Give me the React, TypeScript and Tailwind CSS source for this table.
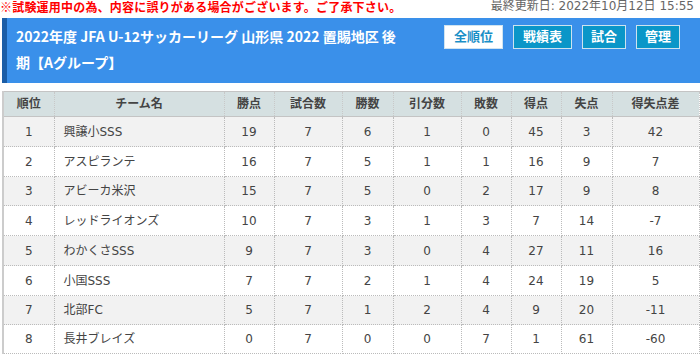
import React from "react";

const rows = [
  [1, "興譲小SSS", 19, 7, 6, 1, 0, 45, 3, 42],
  [2, "アスピランテ", 16, 7, 5, 1, 1, 16, 9, 7],
  [3, "アビーカ米沢", 15, 7, 5, 0, 2, 17, 9, 8],
  [4, "レッドライオンズ", 10, 7, 3, 1, 3, 7, 14, -7],
  [5, "わかくさSSS", 9, 7, 3, 0, 4, 27, 11, 16],
  [6, "小国SSS", 7, 7, 2, 1, 4, 24, 19, 5],
  [7, "北部FC", 5, 7, 1, 2, 4, 9, 20, -11],
  [8, "長井ブレイズ", 0, 7, 0, 0, 7, 1, 61, -60],
];

const heads = ["順位", "チーム名", "勝点", "試合数", "勝数", "引分数", "敗数", "得点", "失点", "得失点差"];
const widths = [51, 170, 50, 68, 51, 68, 50, 50, 51, 87];
const heights = [30, 30, 29, 30, 30, 30, 29, 29];

export default function App() {
  return (
    <div
      className="w-[700px] h-[358px] overflow-hidden bg-white"
      style={{ fontFamily: '"DejaVu Sans", "Noto Sans CJK JP", sans-serif' }}
    >
      <div className="flex justify-between items-end -mt-[1px] h-[15px] leading-[15px] text-[12px]">
        <span className="font-bold text-[#ff0000] tracking-[0.2px]" style={{ fontFamily: '"Noto Sans CJK JP", sans-serif' }}>
          ※試験運用中の為、内容に誤りがある場合がございます。ご了承下さい。
        </span>
        <span className="text-[#666] mr-[6px]">最終更新日: 2022年10月12日 15:55</span>
      </div>

      <div className="mt-[4px] ml-[2px] h-[65px] flex border-l-[5px] border-[#1b5da6] bg-[#3a90ea]">
        <div
          className="pl-[9px] pt-[5px] text-[14px] leading-[26px] font-bold text-white whitespace-nowrap"
          style={{ fontFamily: '"Noto Sans CJK JP", sans-serif' }}
        >
          2022年度 JFA U-12サッカーリーグ 山形県 2022 置賜地区 後
          <br />
          期【Aグループ】
        </div>
        <div className="ml-auto mr-[20px] mt-[7px] flex gap-[10px] h-[24px]">
          <div className="h-[24px] px-[9px] flex items-center border border-[#d0e4f0] bg-white text-[#1a8fc7] text-[13px] font-bold">全順位</div>
          <div className="h-[24px] px-[9px] flex items-center border border-[#cde3ef] bg-[#0a96c8] text-white text-[13px] font-bold">戦績表</div>
          <div className="h-[24px] px-[8px] flex items-center border border-[#cde3ef] bg-[#0a96c8] text-white text-[13px] font-bold">試合</div>
          <div className="h-[24px] px-[8px] flex items-center border border-[#cde3ef] bg-[#0a96c8] text-white text-[13px] font-bold">管理</div>
        </div>
      </div>

      <table className="mt-[8px] ml-[2px] w-[696px] table-fixed border-collapse border-l-2 border-l-[#cccccc] text-[12px] text-[#444]">
        <colgroup>
          {widths.map((w, i) => (
            <col key={i} style={{ width: w }} />
          ))}
        </colgroup>
        <thead>
          <tr className="h-[25px] bg-[#d5e0e1]">
            {heads.map((h, i) => (
              <th
                key={i}
                className="font-bold text-center border-y border-y-[#c4c4c4] border-x border-x-[#c8c8c8] border-dotted p-0"
                style={{ borderTopStyle: "solid", borderBottomStyle: "solid" }}
              >
                {h}
              </th>
            ))}
          </tr>
        </thead>
        <tbody>
          {rows.map((r, ri) => (
            <tr key={ri} className={ri % 2 === 0 ? "bg-[#f2f2f2]" : "bg-white"} style={{ height: heights[ri] }}>
              {r.map((c, ci) => (
                <td
                  key={ci}
                  className={`border border-dotted border-[#bbbbbb] p-0 ${ci === 1 ? "text-left pl-[9px]" : "text-center"}`}
                >
                  {c}
                </td>
              ))}
            </tr>
          ))}
        </tbody>
      </table>
    </div>
  );
}
